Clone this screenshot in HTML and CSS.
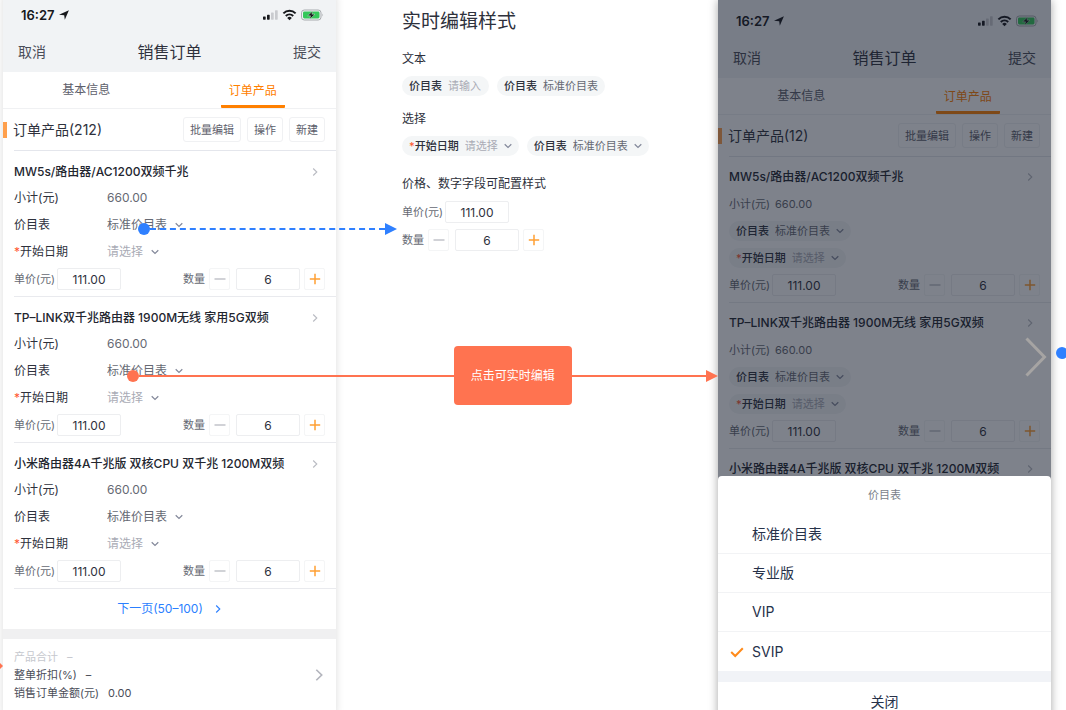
FILE: index.html
```html
<!DOCTYPE html>
<html lang="zh-CN">
<head>
<meta charset="utf-8">
<meta name="viewport" content="width=device-width, initial-scale=1">
<title>销售订单</title>
<link rel="stylesheet" href="styles.css">
</head>
<body>
<svg class="defs" aria-hidden="true">
  <symbol id="down" viewBox="0 0 8 8"><path d="M.7 2.3 4 5.5 7.3 2.3" fill="none" stroke="currentColor" stroke-width="1.2"/></symbol>
  <symbol id="right" viewBox="0 0 8 8"><path d="M2.2.5 5.8 4 2.2 7.5" fill="none" stroke="currentColor" stroke-width="1.1"/></symbol>
  <symbol id="minus" viewBox="0 0 12 12"><path d="M.5 6h11" stroke="currentColor" stroke-width="1.2"/></symbol>
  <symbol id="plus" viewBox="0 0 12 12"><path d="M.8 6h10.4M6 .8v10.4" stroke="currentColor" stroke-width="1.5"/></symbol>
  <symbol id="locate" viewBox="0 0 10 10"><path d="M9.9.3 5.8 9.8 5.2 5.3 0 4.8Z" fill="currentColor"/></symbol>
  <symbol id="status" viewBox="0 0 62 12">
    <rect x="1" y="7.4" width="2.7" height="3.3" rx=".6" fill="#17181c"/>
    <rect x="5" y="5.8" width="2.7" height="4.9" rx=".6" fill="#17181c"/>
    <rect x="9" y="3.6" width="2.7" height="7.1" rx=".6" fill="#c9cbcf"/>
    <rect x="13" y="1.2" width="2.7" height="9.5" rx=".6" fill="#c9cbcf"/>
    <g fill="none" stroke="#17181c" stroke-width="2">
      <path d="M21.4 4.4a8.6 8.6 0 0 1 12.2 0"/>
      <path d="M23.8 7a5.3 5.3 0 0 1 7.4 0"/>
    </g>
    <path d="M27.5 11.2 25.2 8.9a3.2 3.2 0 0 1 4.6 0Z" fill="#17181c"/>
    <rect x="39.5" y="1" width="19.5" height="10" rx="2.8" fill="none" stroke="#a7aaae"/>
    <rect x="41" y="2.5" width="16.5" height="7" rx="1.4" fill="#34c759"/>
    <path d="M60.4 4.4q1.5 1.6 0 3.2Z" fill="#a7aaae"/>
    <path d="M50.8 1.9 45.6 6.8h3l-1 3.5 5.4-5.1h-3.1Z" fill="#17181c" stroke="#eef7ef" stroke-width=".4"/>
  </symbol>
</svg>

<main class="board">
  <section class="phone raised">
    <header class="top">
      <div class="status"><span class="time">16:27<svg class="i10"><use href="#locate"/></svg></span><svg class="signals"><use href="#status"/></svg></div>
      <nav class="nav"><button>取消</button><h1>销售订单</h1><button>提交</button></nav>
    </header>
    <div class="tabs"><button>基本信息</button><button class="on"><span>订单产品</span></button></div>
    <div class="section"><h2>订单产品(212)</h2><button>批量编辑</button><button>操作</button><button>新建</button></div>

    <article class="item">
      <h3 class="row name">MW5s/路由器/AC1200双频千兆<svg class="i8"><use href="#right"/></svg></h3>
      <div class="row"><span class="key">小计(元)</span><span>660.00</span></div>
      <label class="row"><span class="key">价目表</span><select><option>标准价目表</option></select><svg class="i8"><use href="#down"/></svg></label>
      <label class="row empty"><span class="key"><i>*</i>开始日期</span><select><option>请选择</option></select><svg class="i8"><use href="#down"/></svg></label>
      <div class="nums">
        <label class="num">单价(元)<input value="111.00"></label>
        <div class="num qty"><label for="q1">数量</label><button aria-label="减少"><svg class="i12"><use href="#minus"/></svg></button><input id="q1" value="6"><button class="add" aria-label="增加"><svg class="i12"><use href="#plus"/></svg></button></div>
      </div>
    </article>
    <article class="item">
      <h3 class="row name">TP–LINK双千兆路由器 1900M无线 家用5G双频<svg class="i8"><use href="#right"/></svg></h3>
      <div class="row"><span class="key">小计(元)</span><span>660.00</span></div>
      <label class="row"><span class="key">价目表</span><select><option>标准价目表</option></select><svg class="i8"><use href="#down"/></svg></label>
      <label class="row empty"><span class="key"><i>*</i>开始日期</span><select><option>请选择</option></select><svg class="i8"><use href="#down"/></svg></label>
      <div class="nums">
        <label class="num">单价(元)<input value="111.00"></label>
        <div class="num qty"><label for="q2">数量</label><button aria-label="减少"><svg class="i12"><use href="#minus"/></svg></button><input id="q2" value="6"><button class="add" aria-label="增加"><svg class="i12"><use href="#plus"/></svg></button></div>
      </div>
    </article>
    <article class="item">
      <h3 class="row name">小米路由器4A千兆版 双核CPU 双千兆 1200M双频<svg class="i8"><use href="#right"/></svg></h3>
      <div class="row"><span class="key">小计(元)</span><span>660.00</span></div>
      <label class="row"><span class="key">价目表</span><select><option>标准价目表</option></select><svg class="i8"><use href="#down"/></svg></label>
      <label class="row empty"><span class="key"><i>*</i>开始日期</span><select><option>请选择</option></select><svg class="i8"><use href="#down"/></svg></label>
      <div class="nums">
        <label class="num">单价(元)<input value="111.00"></label>
        <div class="num qty"><label for="q3">数量</label><button aria-label="减少"><svg class="i12"><use href="#minus"/></svg></button><input id="q3" value="6"><button class="add" aria-label="增加"><svg class="i12"><use href="#plus"/></svg></button></div>
      </div>
    </article>

    <a class="next" href="#next">下一页(50–100)<svg class="i8"><use href="#right"/></svg></a>
    <footer class="totals">
      <div class="sums">
        <p class="faint"><span>产品合计</span><span>–</span></p>
        <p><span>整单折扣(%)</span><span>–</span></p>
        <p><span>销售订单金额(元)</span><span>0.00</span></p>
      </div>
      <svg class="i12"><use href="#right"/></svg>
    </footer>
  </section>

  <section class="notes">
    <h2 class="title">实时编辑样式</h2>
    <h3>文本</h3>
    <div class="pills">
      <label class="pill empty"><b>价目表</b><input class="short" placeholder="请输入"></label>
      <label class="pill"><b>价目表</b><input class="long" value="标准价目表"></label>
    </div>
    <h3>选择</h3>
    <div class="pills">
      <label class="pill empty"><b><i>*</i>开始日期</b><select><option>请选择</option></select><svg class="i8"><use href="#down"/></svg></label>
      <label class="pill"><b>价目表</b><select><option>标准价目表</option></select><svg class="i8"><use href="#down"/></svg></label>
    </div>
    <h3 class="later">价格、数字字段可配置样式</h3>
    <div class="samples">
      <label class="num">单价(元)<input value="111.00"></label>
      <div class="num qty"><label for="q4">数量</label><button aria-label="减少"><svg class="i12"><use href="#minus"/></svg></button><input id="q4" value="6"><button class="add" aria-label="增加"><svg class="i12"><use href="#plus"/></svg></button></div>
    </div>
  </section>

  <section class="phone shaded">
    <header class="top">
      <div class="status"><span class="time">16:27<svg class="i10"><use href="#locate"/></svg></span><svg class="signals"><use href="#status"/></svg></div>
      <nav class="nav"><button>取消</button><h1>销售订单</h1><button>提交</button></nav>
    </header>
    <div class="tabs"><button>基本信息</button><button class="on"><span>订单产品</span></button></div>
    <div class="section"><h2>订单产品(12)</h2><button>批量编辑</button><button>操作</button><button>新建</button></div>

    <article class="item compact">
      <h3 class="row name">MW5s/路由器/AC1200双频千兆<svg class="i8"><use href="#right"/></svg></h3>
      <div class="row"><span>小计(元)</span><span>660.00</span></div>
      <div class="row"><label class="pill"><b>价目表</b><select><option>标准价目表</option></select><svg class="i8"><use href="#down"/></svg></label></div>
      <div class="row"><label class="pill empty"><b><i>*</i>开始日期</b><select><option>请选择</option></select><svg class="i8"><use href="#down"/></svg></label></div>
      <div class="nums">
        <label class="num">单价(元)<input value="111.00"></label>
        <div class="num qty"><label for="q5">数量</label><button aria-label="减少"><svg class="i12"><use href="#minus"/></svg></button><input id="q5" value="6"><button class="add" aria-label="增加"><svg class="i12"><use href="#plus"/></svg></button></div>
      </div>
    </article>
    <article class="item compact">
      <h3 class="row name">TP–LINK双千兆路由器 1900M无线 家用5G双频<svg class="i8"><use href="#right"/></svg></h3>
      <div class="row"><span>小计(元)</span><span>660.00</span></div>
      <div class="row"><label class="pill"><b>价目表</b><select><option>标准价目表</option></select><svg class="i8"><use href="#down"/></svg></label></div>
      <div class="row"><label class="pill empty"><b><i>*</i>开始日期</b><select><option>请选择</option></select><svg class="i8"><use href="#down"/></svg></label></div>
      <div class="nums">
        <label class="num">单价(元)<input value="111.00"></label>
        <div class="num qty"><label for="q6">数量</label><button aria-label="减少"><svg class="i12"><use href="#minus"/></svg></button><input id="q6" value="6"><button class="add" aria-label="增加"><svg class="i12"><use href="#plus"/></svg></button></div>
      </div>
    </article>
    <article class="item compact">
      <h3 class="row name">小米路由器4A千兆版 双核CPU 双千兆 1200M双频<svg class="i8"><use href="#right"/></svg></h3>
    </article>

    <div class="overlay">
      <div class="sheet">
        <h4>价目表</h4>
        <label class="option"><input type="radio" name="book"><svg viewBox="0 0 14 12"><path d="M1.2 6 5.2 10 12.8 2.2"/></svg>标准价目表</label>
        <label class="option"><input type="radio" name="book"><svg viewBox="0 0 14 12"><path d="M1.2 6 5.2 10 12.8 2.2"/></svg>专业版</label>
        <label class="option"><input type="radio" name="book"><svg viewBox="0 0 14 12"><path d="M1.2 6 5.2 10 12.8 2.2"/></svg>VIP</label>
        <label class="option"><input type="radio" name="book" checked><svg viewBox="0 0 14 12"><path d="M1.2 6 5.2 10 12.8 2.2"/></svg>SVIP</label>
        <button class="close">关闭</button>
      </div>
    </div>
    <svg class="forward" viewBox="0 0 22 40" aria-hidden="true"><path d="M1.5 1.5 19.5 20 1.5 38.5"/></svg>
  </section>

  <div class="link blue"><span class="dot"></span><span class="line"></span><span class="head"></span></div>
  <div class="link red"><span class="dot"></span><span class="line"></span><span class="callout">点击可实时编辑</span><span class="line end"></span><span class="head"></span></div>
  <span class="tip"></span>
  <span class="dot anchor"></span>
</main>
</body>
</html>
```
FILE: styles.css
```css
* { box-sizing: border-box; margin: 0; padding: 0; }

body {
  font: 12px/18px Inter, "Noto Sans CJK SC", sans-serif;
  color: #2e313c;
  background: #fff;
}

button, input, select {
  font: inherit;
  color: inherit;
  background: none;
  border: 0;
  appearance: none;
  outline: 0;
}

button { cursor: pointer; }
h1, h2, h3, h4 { font-size: 12px; font-weight: 400; }
i { font-style: normal; color: #ff5730; }
svg { display: block; flex: none; }

.defs { position: absolute; width: 0; height: 0; }
.i8 { width: 8px; height: 8px; }
.i10 { width: 10px; height: 10px; }
.i12 { width: 12px; height: 12px; }

.board {
  position: relative;
  display: grid;
  grid-template-columns: 333fr 382fr 333fr;
  align-items: start;
  height: 100vh;
  padding: 0 15px 0 3px;
  overflow: hidden;
}

/* Phone frame */
.phone {
  position: relative;
  aspect-ratio: 375 / 812;
  background: #fff;
  box-shadow: 0 0 8px rgba(0, 0, 0, .14);
}
.raised { margin-top: -6px; }
.shaded { box-shadow: 0 0 9px rgba(0, 0, 0, .35); }

.top { background: #f1f3f5; }
.status {
  display: flex;
  align-items: center;
  justify-content: space-between;
  height: 41px;
  padding: 0 12px 0 18px;
}
.time { display: flex; align-items: center; gap: 4px; font-size: 13px; font-weight: 600; color: #17181c; }
.signals { width: 62px; height: 12px; }
.nav {
  display: flex;
  align-items: center;
  justify-content: space-between;
  height: 37px;
  padding: 0 15px 3px;
  font-size: 14px;
}
.nav button { color: #4a4d58; }
.nav h1 { font-size: 16px; }

.tabs { display: grid; grid-template-columns: 1fr 1fr; height: 37px; border-bottom: 1px solid #f0f1f3; }
.tabs button { display: flex; justify-content: center; align-items: center; color: #5d606b; }
.tabs .on { color: #ff8000; }
.tabs .on span { padding: 10px 8px 5px; border-bottom: 3px solid #ff8000; border-radius: 1px; }

.section {
  display: flex;
  align-items: center;
  gap: 6px;
  height: 42px;
  margin-left: 11px;
  padding-right: 11px;
  border-bottom: 1px solid #e4e6ec;
}
.section::before {
  content: "";
  width: 4px;
  height: 16px;
  margin-left: -11px;
  background: #ffa04d;
}
.section h2 { flex: 1; font-size: 14px; }
.section button {
  height: 25px;
  padding: 0 6px;
  font-size: 11px;
  color: #5d606b;
  border: 1px solid #f0f1f3;
  border-radius: 3px;
}

/* Product rows */
.item { margin-left: 11px; padding: 8px 11px 6px 0; border-bottom: 1px solid #e9eaee; color: #666973; }
.row { display: flex; align-items: center; gap: 7px; height: 27px; }
.row.name, .row.name + .row { height: 26px; }
.name {
  justify-content: space-between;
  padding-right: 6px;
  font-weight: 500;
  color: #23262f;
}
.key { width: 86px; color: #2e313c; }
.empty select, .empty input::placeholder { color: #a9abb5; }
.row .i8, .pill .i8 { color: #83889a; }
.row.name .i8 { color: #b9bbc2; }

.item.compact { padding-top: 7px; }
.compact .row { gap: 5px; }
.compact .name + .row { height: 27px; font-size: 11px; }
.compact:last-of-type { border: 0; }

.nums { display: flex; justify-content: space-between; margin-top: 3px; }
.num { display: flex; align-items: center; gap: 2px; font-size: 11px; color: #666973; }
.qty { gap: 4px; }
.num input {
  width: 64px;
  height: 22px;
  font-size: 12px;
  text-align: center;
  color: #2e313c;
  border: 1px solid #edeef0;
  border-radius: 2px;
}
.num button {
  display: grid;
  place-items: center;
  width: 21px;
  height: 22px;
  color: #b3b5bd;
  border: 1px solid #f4f5f6;
  border-radius: 2px;
}
.num .add { color: #ffa033; }
.qty input { margin-left: 2px; }

.next {
  display: flex;
  align-items: center;
  justify-content: center;
  gap: 11px;
  height: 40px;
  color: #2b7fff;
  text-decoration: none;
}

.totals {
  display: flex;
  align-items: center;
  justify-content: space-between;
  padding: 9px 11px 12px;
  font-size: 11px;
  color: #4a4d58;
  border-top: 10px solid #f0f0f1;
}
.totals p { display: flex; gap: 9px; }
.totals .faint { color: #c6c8ce; }
.totals .i12 { color: #b3b5bd; }

/* Middle notes */
.notes { padding: 10px 0 0 66px; }
.notes .title { font-size: 19px; line-height: 24px; }
.notes h3 { margin-top: 14px; }
.notes .title + h3 { margin-top: 16px; }
.notes .later { margin-top: 19px; }
.pills { display: flex; gap: 8px; margin-top: 8px; }
.pill {
  display: flex;
  align-items: center;
  gap: 6px;
  height: 20px;
  padding: 0 7px;
  font-size: 11px;
  color: #666973;
  background: #f4f6f7;
  border-radius: 10px;
}
.pill b { font-weight: 500; color: #2e313c; }
.pill .short { width: 34px; }
.pill .long { width: 55px; }
.samples { display: grid; gap: 6px; margin-top: 8px; }

/* Bottom sheet */
.overlay {
  position: absolute;
  inset: 0;
  display: flex;
  flex-direction: column;
  justify-content: flex-end;
  background: rgba(20, 28, 44, .55);
}
.sheet { background: #fff; border-radius: 4px 4px 0 0; color: #27324a; font-size: 14px; }
.sheet h4 { font-size: 11px; line-height: 39px; text-align: center; color: #7b7f8a; }
.option {
  display: flex;
  align-items: center;
  gap: 8px;
  height: 39px;
  padding-left: 12px;
  border-bottom: 1px solid #f2f3f5;
}
.option input { position: absolute; opacity: 0; }
.option svg { width: 14px; height: 12px; visibility: hidden; }
.option path { fill: none; stroke: #ff8a1a; stroke-width: 2; }
.option input:checked + svg { visibility: visible; }
.option:last-of-type { border: 0; }
.close { width: 100%; height: 50px; border-top: 11px solid #f1f3f7; }
.forward { position: absolute; top: 337px; right: 4px; width: 22px; height: 40px; }
.forward path { fill: none; stroke: #a6a4a3; stroke-width: 3; }

/* Connectors between the artboards */
.link { position: absolute; display: flex; align-items: center; }
.dot { width: 12px; height: 12px; border-radius: 50%; background: currentColor; }
.line { flex: 1; border-top: 2px solid; }
.head { border: 6px solid transparent; border-left: 12px solid; border-right: 0; }
.blue { top: 223px; left: 138px; width: 259px; color: #2f80ff; }
.blue .line { border-top-style: dashed; }
.red { top: 346px; left: 127px; right: 348px; color: #ff7350; }
.red .line { flex-grow: 314; }
.red .end { flex-grow: 134; }
.callout {
  padding: 20px 17px;
  line-height: 19px;
  color: #fff;
  background: #ff7350;
  border-radius: 4px;
}
.tip { position: absolute; top: 663px; left: 0; border: 3px solid transparent; border-left-color: #ff7350; border-right: 0; }
.anchor { position: absolute; top: 347px; right: -2px; color: #2f80ff; }
```
